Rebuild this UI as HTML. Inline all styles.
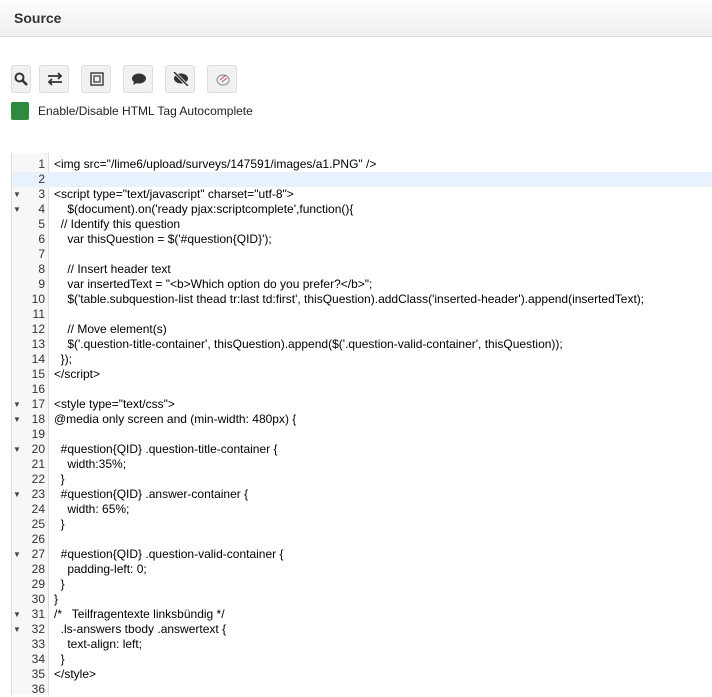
<!DOCTYPE html>
<html><head><style>
body{margin:0;width:712px;height:695px;overflow:hidden;background:#fff;font-family:"Liberation Sans",Arial,sans-serif;position:relative}
.hd{position:absolute;left:0;top:0;width:712px;height:36px;background:linear-gradient(#fdfdfd,#f0f0f0);border-bottom:1px solid #d8d8d8}
.hd span{position:absolute;left:14px;top:10px;font-size:14px;font-weight:bold;color:#333}
.btn{position:absolute;top:65px;width:30px;height:28px;border:1px solid #ddd;border-radius:3px;background:#f1f1f1;box-sizing:border-box}
.btn svg{position:absolute;left:7px;top:6px}
.sq{position:absolute;left:11px;top:102px;width:18px;height:18px;background:#2e8b3e;border-radius:2px}
.lbl{position:absolute;left:38px;top:104px;font-size:12px;color:#222}
.ed{position:absolute;left:11px;top:153px;width:701px;height:542px;border-left:1px solid #ddd}
.gut{position:absolute;left:0;top:0;width:36px;height:542px;background:#f7f7f7;border-right:1px solid #ddd}
.lines{position:absolute;left:0;top:4px;width:701px;font-size:12px;line-height:15px;color:#000}
.l{height:15px;position:relative;white-space:pre}
.l .n{position:absolute;left:0;width:33px;text-align:right;color:#333}
.l .c{position:absolute;left:42px}
.l .f{position:absolute;left:1px;font-size:8px;color:#444}
.act{background:#e8f2ff}
</style></head><body>
<div class="hd"><span>Source</span></div>
<div class="btn" style="left:11px;width:20px"><svg width="14" height="14" viewBox="0 0 14 14" style="left:2px"><circle cx="5.5" cy="5.5" r="4" fill="none" stroke="#333" stroke-width="2"/><path d="M8.5 8.5L13 13" stroke="#333" stroke-width="2.5"/></svg></div>
<div class="btn" style="left:39px"><svg width="16" height="14" viewBox="0 0 16 14"><path d="M1 4h13M11 1l3 3-3 3M15 10H2M5 7l-3 3 3 3" fill="none" stroke="#333" stroke-width="1.8"/></svg></div>
<div class="btn" style="left:81px"><svg width="14" height="14" viewBox="0 0 14 14" style="left:8px"><rect x="1" y="1" width="12" height="12" fill="none" stroke="#444" stroke-width="1.5"/><rect x="4" y="4" width="6" height="6" fill="none" stroke="#444" stroke-width="1.3"/></svg></div>
<div class="btn" style="left:123px"><svg width="16" height="14" viewBox="0 0 16 14"><ellipse cx="8" cy="6.5" rx="7" ry="5" fill="#333"/><path d="M3 10l-1 3 4-2z" fill="#333"/></svg></div>
<div class="btn" style="left:165px"><svg width="16" height="14" viewBox="0 0 16 14"><ellipse cx="8" cy="6.5" rx="7" ry="5" fill="#333"/><path d="M1 0l14 14" stroke="#f1f1f1" stroke-width="3"/><path d="M1 0l14 14" stroke="#333" stroke-width="1.5"/></svg></div>
<div class="btn" style="left:207px"><svg width="16" height="14" viewBox="0 0 16 14"><ellipse cx="8" cy="8" rx="6" ry="5" fill="none" stroke="#999" stroke-width="1.2"/><path d="M5 8l6-5M7 10l5-4" stroke="#b55" stroke-width="1"/></svg></div>
<div class="sq"></div>
<div class="lbl">Enable/Disable HTML Tag Autocomplete</div>
<div class="ed"><div class="gut"></div>
<div class="lines">
<div class="l"><span class="n">1</span><span class="c">&lt;img src="/lime6/upload/surveys/147591/images/a1.PNG" /&gt;</span></div>
<div class="l act"><span class="n">2</span></div>
<div class="l"><span class="f">▼</span><span class="n">3</span><span class="c">&lt;script type="text/javascript" charset="utf-8"&gt;</span></div>
<div class="l"><span class="f">▼</span><span class="n">4</span><span class="c">    $(document).on('ready pjax:scriptcomplete',function(){</span></div>
<div class="l"><span class="n">5</span><span class="c">  // Identify this question</span></div>
<div class="l"><span class="n">6</span><span class="c">    var thisQuestion = $('#question{QID}');</span></div>
<div class="l"><span class="n">7</span></div>
<div class="l"><span class="n">8</span><span class="c">    // Insert header text</span></div>
<div class="l"><span class="n">9</span><span class="c">    var insertedText = "&lt;b&gt;Which option do you prefer?&lt;/b&gt;";</span></div>
<div class="l"><span class="n">10</span><span class="c">    $('table.subquestion-list thead tr:last td:first', thisQuestion).addClass('inserted-header').append(insertedText);</span></div>
<div class="l"><span class="n">11</span></div>
<div class="l"><span class="n">12</span><span class="c">    // Move element(s)</span></div>
<div class="l"><span class="n">13</span><span class="c">    $('.question-title-container', thisQuestion).append($('.question-valid-container', thisQuestion));</span></div>
<div class="l"><span class="n">14</span><span class="c">  });</span></div>
<div class="l"><span class="n">15</span><span class="c">&lt;/script&gt;</span></div>
<div class="l"><span class="n">16</span></div>
<div class="l"><span class="f">▼</span><span class="n">17</span><span class="c">&lt;style type="text/css"&gt;</span></div>
<div class="l"><span class="f">▼</span><span class="n">18</span><span class="c">@media only screen and (min-width: 480px) {</span></div>
<div class="l"><span class="n">19</span></div>
<div class="l"><span class="f">▼</span><span class="n">20</span><span class="c">  #question{QID} .question-title-container {</span></div>
<div class="l"><span class="n">21</span><span class="c">    width:35%;</span></div>
<div class="l"><span class="n">22</span><span class="c">  }</span></div>
<div class="l"><span class="f">▼</span><span class="n">23</span><span class="c">  #question{QID} .answer-container {</span></div>
<div class="l"><span class="n">24</span><span class="c">    width: 65%;</span></div>
<div class="l"><span class="n">25</span><span class="c">  }</span></div>
<div class="l"><span class="n">26</span></div>
<div class="l"><span class="f">▼</span><span class="n">27</span><span class="c">  #question{QID} .question-valid-container {</span></div>
<div class="l"><span class="n">28</span><span class="c">    padding-left: 0;</span></div>
<div class="l"><span class="n">29</span><span class="c">  }</span></div>
<div class="l"><span class="n">30</span><span class="c">}</span></div>
<div class="l"><span class="f">▼</span><span class="n">31</span><span class="c">/*   Teilfragentexte linksbündig */</span></div>
<div class="l"><span class="f">▼</span><span class="n">32</span><span class="c">  .ls-answers tbody .answertext {</span></div>
<div class="l"><span class="n">33</span><span class="c">    text-align: left;</span></div>
<div class="l"><span class="n">34</span><span class="c">  }</span></div>
<div class="l"><span class="n">35</span><span class="c">&lt;/style&gt;</span></div>
<div class="l"><span class="n">36</span></div>
</div></div>
</body></html>
